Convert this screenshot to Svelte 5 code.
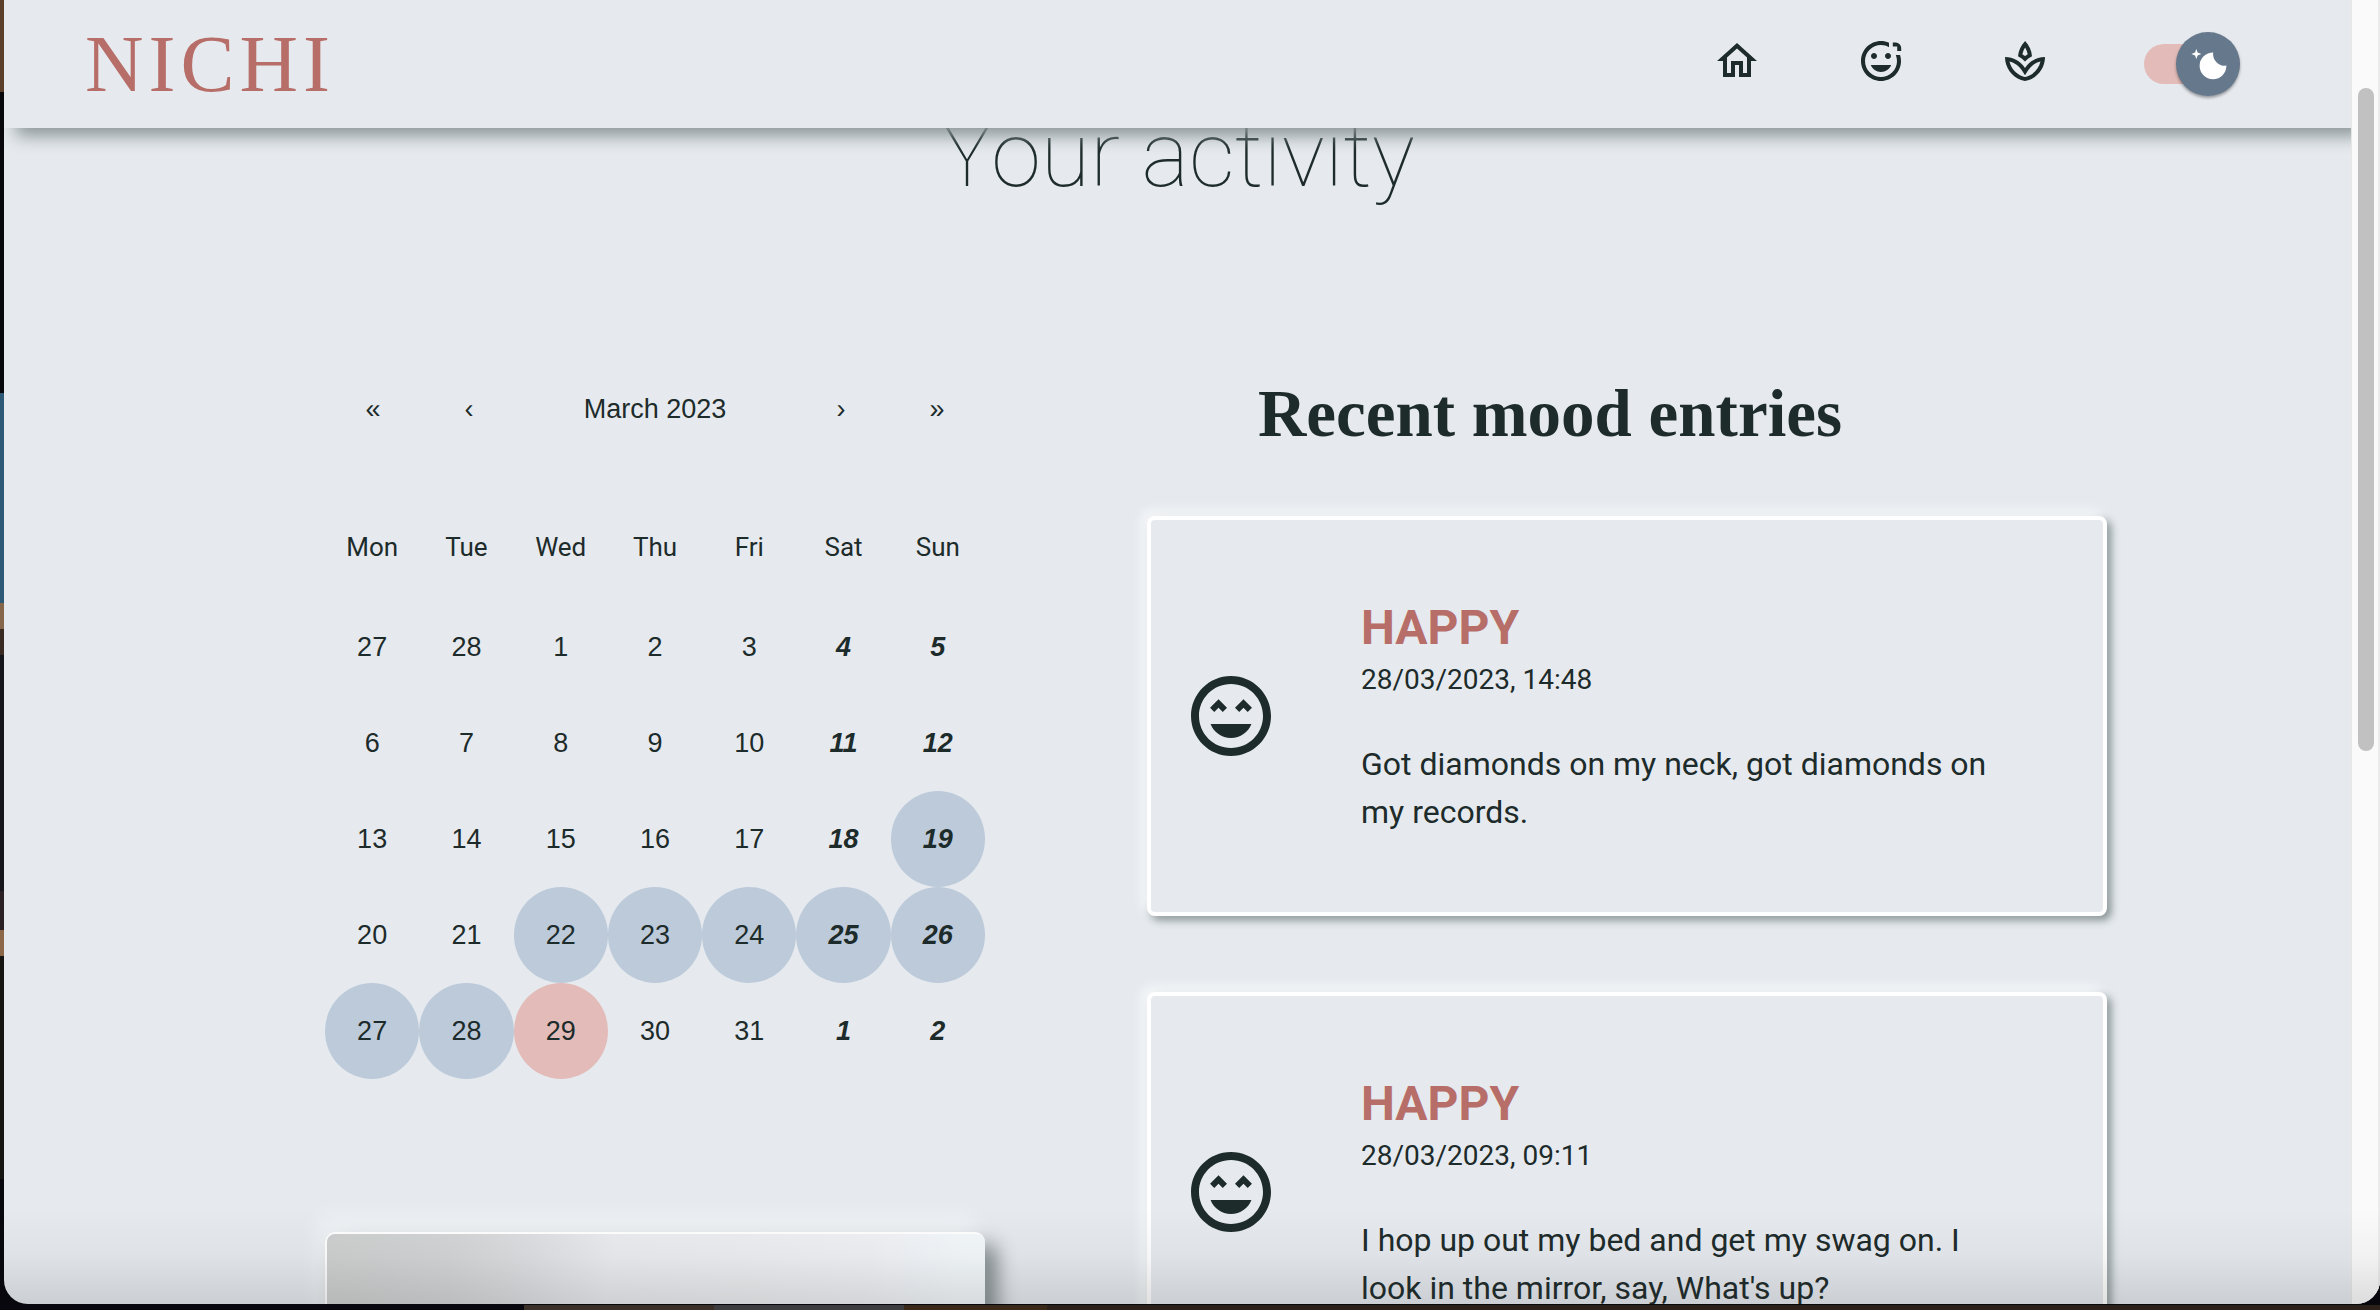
<script>
  const weekdays = ['Mon', 'Tue', 'Wed', 'Thu', 'Fri', 'Sat', 'Sun'];
  const weeks = [
    [27, 28, 1, 2, 3, 4, 5],
    [6, 7, 8, 9, 10, 11, 12],
    [13, 14, 15, 16, 17, 18, 19],
    [20, 21, 22, 23, 24, 25, 26],
    [27, 28, 29, 30, 31, 1, 2],
  ];
  const logged = new Set(['2-6', '3-2', '3-3', '3-4', '3-5', '3-6', '4-0', '4-1']);
  const today = '4-2';

  const entries = [
    { mood: 'HAPPY', date: '28/03/2023, 14:48', note: 'Got diamonds on my neck, got diamonds on my records.' },
    { mood: 'HAPPY', date: '28/03/2023, 09:11', note: "I hop up out my bed and get my swag on. I look in the mirror, say, What's up?" },
  ];

  let dark = $state(true);
</script>

<div class="desktop">
  <div class="window">
    <div class="page">
      <header>
        <a class="logo" href="#home">NICHI</a>
        <nav aria-label="Main">
          <a href="#home" aria-label="Home">
            <svg viewBox="0 0 24 24"><path d="m12 5.69 5 4.5V18h-2v-6H9v6H7v-7.81l5-4.5M12 3 2 12h3v8h6v-6h2v6h6v-8h3L12 3z" /></svg>
          </a>
          <a href="#mood" aria-label="Log mood">
            <svg viewBox="0 0 24 24"><path d="M7 9.5c0-.83.67-1.5 1.5-1.5s1.5.67 1.5 1.5S9.33 11 8.5 11 7 10.33 7 9.5zm5 8c2.33 0 4.31-1.46 5.11-3.5H6.89c.8 2.04 2.78 3.5 5.11 3.5zM15.5 11c.83 0 1.5-.67 1.5-1.5S16.33 8 15.5 8 14 8.67 14 9.5s.67 1.5 1.5 1.5zM20 12c0 4.42-3.58 8-8 8s-8-3.58-8-8 3.58-8 8-8c1.46 0 2.82.4 4 1.08V2.84C14.77 2.3 13.42 2 11.99 2 6.47 2 2 6.48 2 12s4.47 10 9.99 10C17.52 22 22 17.52 22 12c0-1.05-.17-2.05-.47-3h-2.13c.38.93.6 1.94.6 3zM17.9 2.8h1.5a2.7 2.7 0 0 1 2.7 2.7V7h-2V4.8h-2.2z" /></svg>
          </a>
          <a href="#mindfulness" aria-label="Mindfulness">
            <svg viewBox="0 0 24 24"><path d="M15.49 9.63c-.18-2.79-1.31-5.51-3.43-7.63-2.14 2.14-3.32 4.86-3.55 7.63 1.28.68 2.46 1.56 3.49 2.63 1.03-1.06 2.21-1.94 3.49-2.63zm-3.44-4.44c.63 1.03 1.07 2.18 1.3 3.38-.47.3-.91.63-1.34.98-.42-.34-.87-.67-1.33-.97.25-1.2.71-2.35 1.37-3.39zM12 15.45C9.85 12.17 6.18 10 2 10c0 5.32 3.36 9.82 8.03 11.49.63.23 1.29.4 1.97.51.68-.12 1.33-.29 1.97-.51C18.64 19.82 22 15.32 22 10c-4.18 0-7.85 2.17-10 5.45zm1.32 4.15c-.44.15-.88.27-1.33.37-.44-.09-.87-.21-1.28-.36-3.29-1.18-5.7-3.99-6.45-7.35 1.1.26 2.15.71 3.12 1.33l-.02.01c.13.09.26.18.39.25l.07.04c.99.72 1.84 1.61 2.51 2.65L12 19.1l1.67-2.55c.69-1.05 1.55-1.95 2.53-2.66l.07-.05c.09-.05.18-.11.27-.17l-.01-.02c.98-.65 2.07-1.13 3.21-1.4-.75 3.37-3.15 6.18-6.42 7.35z" /></svg>
          </a>
        </nav>
        <label class="switch">
          <input type="checkbox" bind:checked={dark} aria-label="Dark mode" />
          <span class="thumb">
            <svg viewBox="0 0 20 20"><path d="M4.2 2.5l-.7 1.8-1.8.7 1.8.7.7 1.8.6-1.8L6.7 5l-1.9-.7-.6-1.8zm15 8.3a6.7 6.7 0 11-6.6-6.6 5.8 5.8 0 006.6 6.6z" /></svg>
          </span>
        </label>
      </header>

      <main>
        <h1>Your activity</h1>
        <div class="columns">
          <section class="left">
            <div class="month">
              <button aria-label="Previous year">«</button>
              <button aria-label="Previous month">‹</button>
              <button class="label">March 2023</button>
              <button aria-label="Next month">›</button>
              <button aria-label="Next year">»</button>
            </div>
            <table>
              <thead>
                <tr>{#each weekdays as day}<th scope="col">{day}</th>{/each}</tr>
              </thead>
              <tbody>
                {#each weeks as week, w}
                  <tr>
                    {#each week as day, d}
                      <td>
                        <button
                          class:weekend={d > 4}
                          class:logged={logged.has(`${w}-${d}`)}
                          class:today={today === `${w}-${d}`}>{day}</button>
                      </td>
                    {/each}
                  </tr>
                {/each}
              </tbody>
            </table>
            <div class="photo"></div>
          </section>

          <section class="right">
            <h2>Recent mood entries</h2>
            {#each entries as entry}
              <article>
                <svg viewBox="0 0 24 24"><path d="M11.99 2C6.47 2 2 6.48 2 12s4.47 10 9.99 10C17.52 22 22 17.52 22 12S17.52 2 11.99 2zM12 20c-4.42 0-8-3.58-8-8s3.58-8 8-8 8 3.58 8 8-3.58 8-8 8zm1-10.06L14.06 11l1.06-1.06L16.18 11l1.06-1.06-2.12-2.12L13 9.94zm-4.12 0L9.94 11 11 9.94 8.88 7.82 6.76 9.94 7.82 11l1.06-1.06zM12 17.5c2.33 0 4.31-1.46 5.11-3.5H6.89c.8 2.04 2.78 3.5 5.11 3.5z" /></svg>
                <div class="entry">
                  <h3>{entry.mood}</h3>
                  <time>{entry.date}</time>
                  <p>{entry.note}</p>
                </div>
              </article>
            {/each}
          </section>
        </div>
      </main>
    </div>
    <div class="scrollbar"><div class="grip"></div></div>
    <div class="shade"></div>
  </div>
</div>

<style>
  :global(body) {
    background: #07070d;
  }
  .desktop,
  .desktop * {
    box-sizing: border-box;
  }
  .desktop {
    height: 100vh;
    padding: 0 0 6px 4px;
    overflow: hidden;
    color: #1d2b2a;
    font-family: Roboto, 'Liberation Sans', sans-serif;
    background:
      linear-gradient(90deg, #07070d 0 22%, #3a3028 22% 30%, #3d3d40 30% 38%, #3a2818 38% 44%, #2c2119 44% 100%) bottom / 100% 5px no-repeat,
      linear-gradient(#5c3f2a 0 7%, #08080c 7% 30%, #2d5876 30% 46%, #85664a 46% 48%, #3a2b22 48% 50%, #17151c 50% 68%, #2b2023 68% 71%, #8c6848 71% 73%, #171511 73% 90%, #07070d 90%);
  }
  .window {
    position: relative;
    display: flex;
    height: 100%;
    overflow: hidden;
    border-radius: 0 0 24px 24px;
    background: #e6eaef;
  }
  .page {
    flex: 1;
    min-width: 0;
    overflow: hidden;
  }
  .shade {
    position: absolute;
    inset: auto 0 0 0;
    height: 96px;
    pointer-events: none;
    background: linear-gradient(rgba(40, 40, 40, 0), rgba(40, 40, 40, 0.04) 50%, rgba(40, 40, 40, 0.14));
  }
  .scrollbar {
    flex: none;
    width: 29px;
    padding: 88px 4px 0 6px;
    border-left: 1px solid #e6e6e6;
    border-right: 2px solid #ececec;
    background: #fafafa;
  }
  .grip {
    height: 663px;
    width: 16px;
    border-radius: 8px;
    background: #c1c1c1;
  }

  header {
    position: relative;
    z-index: 1;
    display: flex;
    align-items: center;
    height: 128px;
    padding: 0 97px 0 81px;
    background: #e6eaef;
    box-shadow: 12px 8px 16px #8b9597;
  }
  .logo {
    margin-right: auto;
    color: #b76e68;
    font: 81px/118px 'Liberation Serif', serif;
    letter-spacing: 5px;
    text-decoration: none;
  }
  nav {
    display: flex;
    gap: 96px;
    margin-right: 81px;
    padding-bottom: 6px;
  }
  svg {
    display: block;
    fill: currentColor;
  }
  nav a {
    color: inherit;
  }
  nav svg {
    width: 48px;
    height: 48px;
  }
  .switch {
    display: flex;
    align-items: center;
    justify-content: flex-end;
    width: 124px;
    height: 68px;
    padding: 0 14px;
    cursor: pointer;
  }
  .switch input {
    appearance: none;
    flex: none;
    width: 96px;
    height: 40px;
    margin: 0 -64px 0 0;
    border-radius: 20px;
    background: #e3bbb8;
  }
  .thumb {
    z-index: 1;
    display: grid;
    place-items: center;
    width: 64px;
    height: 64px;
    border-radius: 50%;
    color: #fff;
    background: #66788c;
    box-shadow: 0 2px 3px rgba(0, 0, 0, 0.35);
  }
  .switch input:not(:checked) + .thumb {
    translate: -32px;
  }
  .thumb svg {
    width: 40px;
    height: 40px;
  }

  h1 {
    margin: 0;
    font-size: 90px;
    font-weight: 100;
    line-height: 56px;
    text-align: center;
  }
  .columns {
    display: grid;
    grid-template-columns: 660fr 960fr;
    column-gap: 162px;
    padding: 0 244px 0 321px;
  }
  .left {
    padding-top: 177px;
  }
  .month {
    display: flex;
    margin-bottom: 38px;
  }
  button {
    display: block;
    padding: 0;
    border: 0;
    color: inherit;
    background: none;
    font: 27px/96px 'Liberation Sans', Arial, sans-serif;
    text-align: center;
  }
  .month button {
    flex: none;
    width: 96px;
  }
  .month .label {
    flex: 1;
  }
  table {
    width: 100%;
    table-layout: fixed;
    border-collapse: collapse;
  }
  th,
  td {
    padding: 0;
  }
  th {
    font-size: 26px;
    font-weight: 400;
    line-height: 104px;
  }
  td button {
    width: 100%;
    border-radius: 50%;
  }
  .weekend {
    font-weight: 700;
    font-style: italic;
  }
  .logged {
    background: #bccada;
  }
  .today {
    background: #e3bbb8;
  }
  .photo {
    height: 440px;
    margin-top: 153px;
    border: 2px solid #fff;
    border-right-width: 0;
    border-radius: 10px;
    background: linear-gradient(98deg, #cdd0cf 0, #d3d5d6 18%, #dcdee1 28%, #ebecf0 40%, #edeef1 58%, #f0f1f5 76%, #f3f8fb 88%, #f4f9fc 100%);
    box-shadow: -8px -16px 20px rgba(255, 255, 255, 0.4), 12px 12px 20px #7d8688;
  }

  .right {
    padding-top: 189px;
  }
  h2 {
    margin: 0 0 63px;
    padding-right: 154px;
    font: 700 67px/80px 'Liberation Serif', serif;
    text-align: center;
    white-space: nowrap;
  }
  article {
    display: flex;
    align-items: center;
    gap: 82px;
    margin-bottom: 76px;
    padding: 76px 88px 76px 32px;
    border: 4px solid #fff;
    border-radius: 8px;
    background: #e6eaef;
    box-shadow: -5px -5px 12px rgba(255, 255, 255, 0.7), 4px 4px 8px #7f8b8c;
  }
  article svg {
    flex: none;
    width: 96px;
    height: 96px;
  }
  h3 {
    margin: 0;
    color: #b76e68;
    font-size: 48px;
    font-weight: 700;
    line-height: 64px;
  }
  time {
    display: block;
    margin-bottom: 40px;
    font-size: 28px;
    line-height: 40px;
  }
  p {
    margin: 0;
    font-size: 32px;
    line-height: 48px;
  }
</style>
